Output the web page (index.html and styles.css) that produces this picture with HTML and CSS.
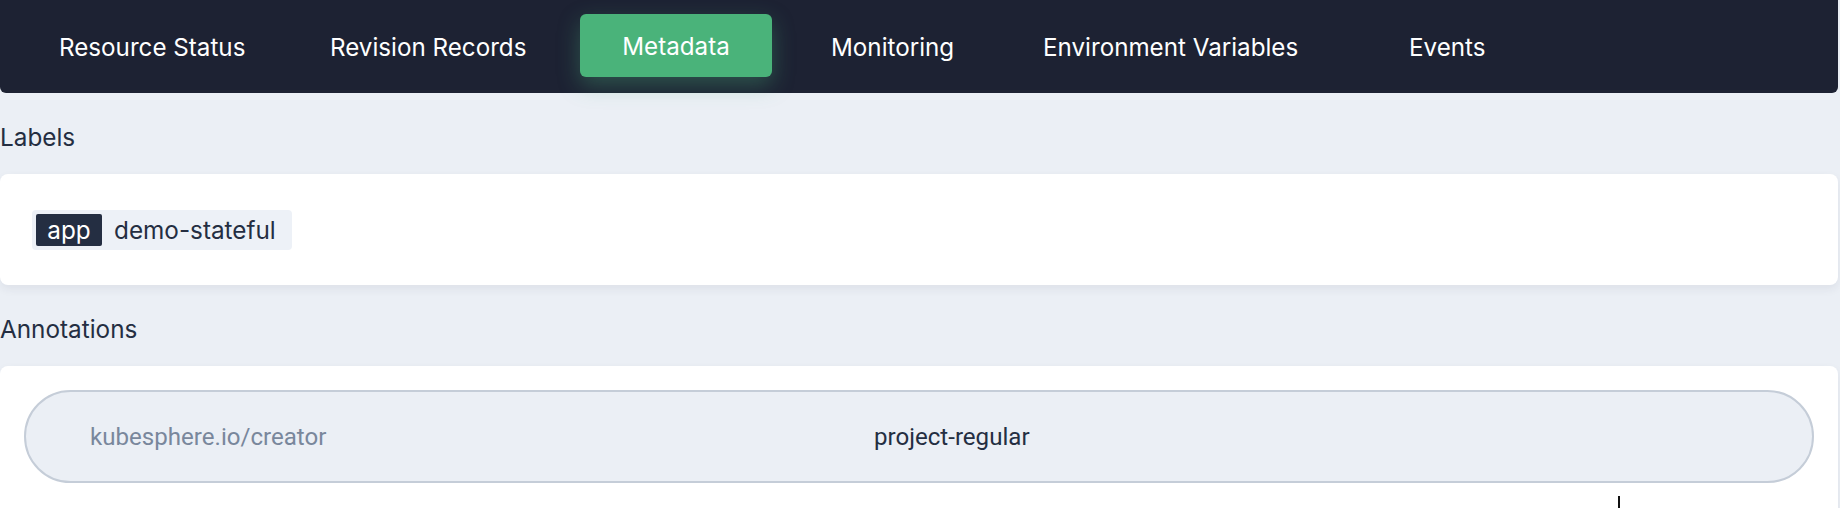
FILE: index.html
```html
<!DOCTYPE html>
<html lang="en">
<head>
<meta charset="utf-8">
<title>Metadata</title>
<link rel="stylesheet" href="styles.css">
</head>
<body>
<div class="page">
  <nav class="tabs">
    <div class="tab">Resource Status</div>
    <div class="tab">Revision Records</div>
    <div class="tab tab-active">Metadata</div>
    <div class="tab">Monitoring</div>
    <div class="tab">Environment Variables</div>
    <div class="tab">Events</div>
  </nav>

  <h2 class="section-title">Labels</h2>
  <section class="card card-labels">
    <span class="label-tag"><span class="label-key">app</span><span class="label-value">demo-stateful</span></span>
  </section>

  <h2 class="section-title">Annotations</h2>
  <section class="card card-annotations">
    <div class="annotation">
      <span class="annotation-key">kubesphere.io/creator</span>
      <span class="annotation-value">project-regular</span>
    </div>
  </section>
</div>
<div class="mouse-cursor"></div>
</body>
</html>
```

FILE: styles.css
```css
* { box-sizing: border-box; }

html, body {
  margin: 0;
  padding: 0;
  background: #ebeff5;
  height: 100%;
  overflow: hidden;
}

body {
  font-family: Inter, "Noto Sans", "Liberation Sans", sans-serif;
  color: #242e42;
  position: relative;
}

.page {
  padding-right: 2px;
}

.tabs {
  height: 93px;
  background: #1d2233;
  border-radius: 0 0 6px 6px;
  display: grid;
  grid-template-columns: 271px 293px 208px 212px 366px auto;
  align-items: center;
  padding-left: 16px;
}

.tab {
  color: #ffffff;
  font-size: 24.2px;
  line-height: 28px;
  padding: 2px 43px 0;
  white-space: nowrap;
}

.tab-active {
  justify-self: start;
  width: 192px;
  height: 63px;
  margin-top: -2px;
  display: flex;
  align-items: center;
  justify-content: center;
  padding: 2px 0 0;
  background: #4ab37a;
  border-radius: 6px;
  box-shadow: 0 8px 22px rgba(74, 179, 122, 0.35);
}

.section-title {
  margin: 0;
  padding: 30px 0 23px;
  font-size: 24.3px;
  line-height: 28px;
  font-weight: 400;
  color: #242e42;
}

.card {
  background: #ffffff;
  border-radius: 8px;
  box-shadow: 0 4px 10px rgba(36, 46, 66, 0.07);
}

.card-labels {
  height: 111px;
  padding: 36px 32px 35px;
}

.label-tag {
  display: inline-flex;
  align-items: center;
  height: 40px;
  padding: 4px;
  background: #edf1f7;
  border-radius: 4px;
  font-size: 24.3px;
}

.label-key {
  display: flex;
  align-items: center;
  justify-content: center;
  width: 66px;
  height: 32px;
  background: #242e42;
  color: #ffffff;
  border-radius: 2px;
}

.label-value {
  padding: 0 12px 0 12px;
  color: #242e42;
}

.card-annotations {
  padding: 24px;
  height: 200px;
}

.annotation {
  height: 93px;
  border: 2px solid #c5cdd8;
  border-radius: 47px;
  background: #ebeff5;
  display: flex;
  align-items: center;
  padding-left: 64px;
  font-family: Roboto, "Liberation Sans", sans-serif;
  font-size: 24.1px;
}

.annotation-key {
  width: 784px;
  color: #79879c;
}

.annotation-value {
  color: #242e42;
}

.mouse-cursor {
  position: absolute;
  left: 1618px;
  top: 496px;
  width: 2px;
  height: 14px;
  background: #111111;
}
```
